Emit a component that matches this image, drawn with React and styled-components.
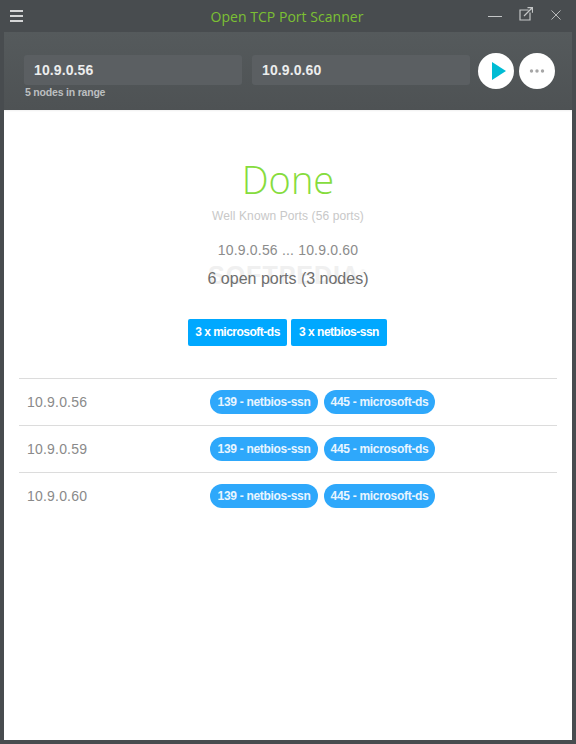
import React from "react";
import styled, { createGlobalStyle } from "styled-components";

const Global = createGlobalStyle`
  html, body { margin: 0; padding: 0; height: 100%; }
  body { font-family: "Liberation Sans", Arial, sans-serif; background: #484c4f; }
  #root { height: 744px; }
  * { box-sizing: border-box; }
`;

const Frame = styled.div`
  width: 576px;
  height: 744px;
  background: #484c4f;
  padding: 0 4px 4px;
  display: flex;
  flex-direction: column;
  overflow: hidden;
`;

const TitleBar = styled.header`
  height: 32px;
  flex: none;
  position: relative;
  display: flex;
  align-items: center;
  justify-content: space-between;
  padding: 0 11px 0 6px;
`;

const Title = styled.div`
  position: absolute;
  left: 0;
  right: 2px;
  top: 7px;
  text-align: center;
  font-family: "Open Sans", sans-serif;
  font-size: 14px;
  letter-spacing: 0.03px;
  line-height: 20px;
  color: #7cc033;
`;

const WinIcon = styled.svg`
  display: block;
  fill: none;
  stroke: ${(p) => p.$color || "#c4c6c7"};
  margin-top: ${(p) => p.$mt || 0}px;
  margin-left: ${(p) => p.$ml || 0}px;
`;

const WinButtons = styled.div`
  display: flex;
  align-items: flex-start;
  margin-top: -3px;
  gap: 16px;
`;

const Toolbar = styled.section`
  height: 78px;
  flex: none;
  background: linear-gradient(#555a5c, #4e5254);
  padding: 23px 17px 0 20px;
`;

const ToolRow = styled.div`
  display: flex;
  align-items: center;
  height: 30px;
`;

const Field = styled.div`
  width: 218px;
  height: 30px;
  background: #5b5f62;
  border-radius: 3px;
  color: #eceded;
  font-weight: 700;
  font-size: 14px;
  line-height: 31px;
  letter-spacing: 0.1px;
  padding-left: 10px;
  margin-right: 10px;
`;

const Round = styled.div`
  width: 36px;
  height: 36px;
  border-radius: 50%;
  background: #fff;
  display: flex;
  align-items: center;
  justify-content: center;
  flex: none;
  margin-top: 2px;
  margin-left: ${(p) => p.$ml}px;
`;

const PlayGlyph = styled.svg`
  display: block;
  margin-left: 5px;
`;

const RangeNote = styled.div`
  font-size: 10.5px;
  font-weight: 700;
  letter-spacing: -0.2px;
  color: #bcbfc0;
  line-height: 12px;
  margin: 1px 0 0 1px;
`;

const Content = styled.main`
  flex: 1;
  background: #fff;
  position: relative;
  padding: 0 15px;
  box-shadow: inset 0 3px 2px -2px #f0f0f0;
`;

const Done = styled.h1`
  margin: 0;
  padding-top: 42px;
  text-align: center;
  font-family: "Open Sans", sans-serif;
  font-weight: 300;
  font-size: 38px;
  line-height: 54px;
  color: #86dc3d;
`;

const Sub = styled.div`
  text-align: center;
  font-size: 12px;
  letter-spacing: 0.1px;
  line-height: 14px;
  margin-top: 3px;
  color: #c8c8c8;
`;

const Range = styled.div`
  text-align: center;
  font-size: 14px;
  letter-spacing: 0.18px;
  line-height: 16px;
  margin-top: 19px;
  color: #8c8c8c;
`;

const Summary = styled.div`
  text-align: center;
  font-size: 16px;
  line-height: 18px;
  margin-top: 12px;
  color: #6e6e6e;
  position: relative;
`;

const Watermark = styled.div`
  position: absolute;
  left: 204px;
  top: 151px;
  font-size: 25px;
  line-height: 28px;
  letter-spacing: 1px;
  font-weight: 700;
  color: #f0f0f0;
`;

const WatermarkMark = styled.sup`
  font-size: 8px;
  font-weight: 400;
  line-height: 0;
`;

const Tags = styled.div`
  display: flex;
  justify-content: center;
  gap: 4px;
  margin-top: 31px;
  padding-right: 1px;
`;

const Tag = styled.span`
  width: ${(p) => p.$w}px;
  height: 27px;
  line-height: 26px;
  text-align: center;
  background: #00a8ff;
  color: #fff;
  font-size: 12px;
  letter-spacing: -0.5px;
  font-weight: 700;
  border-radius: 2px;
  white-space: nowrap;
`;

const List = styled.div`
  margin-top: 32px;
`;

const Row = styled.div`
  height: 47px;
  border-top: 1px solid #dcdcdc;
  display: flex;
  align-items: center;
`;

const Ip = styled.div`
  width: 191px;
  padding-left: 8px;
  font-size: 14px;
  letter-spacing: 0.2px;
  color: #8a8a8a;
  flex: none;
`;

const Pills = styled.div`
  display: flex;
  gap: 6px;
`;

const Pill = styled.span`
  width: ${(p) => p.$w}px;
  height: 24px;
  line-height: 25px;
  text-align: center;
  background: #2ea8fb;
  color: #e8f5ff;
  font-size: 12px;
  letter-spacing: -0.3px;
  font-weight: 700;
  border-radius: 12px;
  white-space: nowrap;
`;

const rows = ["10.9.0.56", "10.9.0.59", "10.9.0.60"];

export default function App() {
  return (
    <>
      <Global />
      <Frame>
        <TitleBar>
          <WinIcon width="14" height="12" viewBox="0 0 14 12" strokeWidth="2" $color="#d4d5d6">
            <path d="M0 1h13M0 6h13M0 11h13" />
          </WinIcon>
          <Title>Open TCP Port Scanner</Title>
          <WinButtons>
            <WinIcon width="15" height="15" viewBox="0 0 15 15" strokeWidth="1">
              <path d="M0 9.5h14" />
            </WinIcon>
            <WinIcon width="14" height="14" viewBox="0 0 14 14" strokeWidth="1.2">
              <path d="M9.5 3H1v10h10V5.5M5 9L13 1M8.5 .7h5v5" />
            </WinIcon>
            <WinIcon width="10" height="10" viewBox="0 0 11 11" strokeWidth="1" $mt={3} $ml={2}>
              <path d="M.5 .5l10 10M10.5 .5l-10 10" />
            </WinIcon>
          </WinButtons>
        </TitleBar>
        <Toolbar>
          <ToolRow>
            <Field>10.9.0.56</Field>
            <Field>10.9.0.60</Field>
            <Round $ml={-2}>
              <PlayGlyph width="16" height="18" viewBox="0 0 16 18"><path d="M1 0l14 9-14 9z" fill="#00bcd4" /></PlayGlyph>
            </Round>
            <Round $ml={5}>
              <svg width="16" height="4" viewBox="0 0 16 4" fill="#a6a6a6">
                <circle cx="2.5" cy="2" r="1.7" /><circle cx="8" cy="2" r="1.7" /><circle cx="13.5" cy="2" r="1.7" />
              </svg>
            </Round>
          </ToolRow>
          <RangeNote>5 nodes in range</RangeNote>
        </Toolbar>
        <Content>
          <Watermark>SOFTPEDIA<WatermarkMark>®</WatermarkMark></Watermark>
          <Done>Done</Done>
          <Sub>Well Known Ports (56 ports)</Sub>
          <Range>10.9.0.56 ... 10.9.0.60</Range>
          <Summary>6 open ports (3 nodes)</Summary>
          <Tags>
            <Tag $w={99}>3 x microsoft-ds</Tag>
            <Tag $w={96}>3 x netbios-ssn</Tag>
          </Tags>
          <List>
            {rows.map((ip) => (
              <Row key={ip}>
                <Ip>{ip}</Ip>
                <Pills>
                  <Pill $w={108}>139 - netbios-ssn</Pill>
                  <Pill $w={111}>445 - microsoft-ds</Pill>
                </Pills>
              </Row>
            ))}
          </List>
        </Content>
      </Frame>
    </>
  );
}
